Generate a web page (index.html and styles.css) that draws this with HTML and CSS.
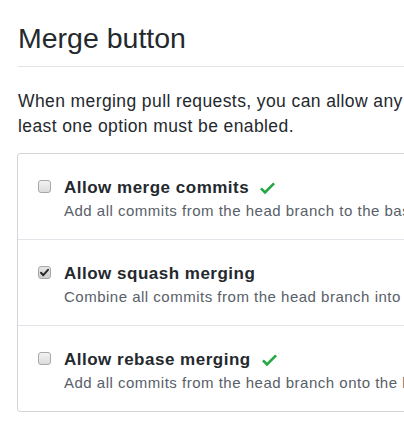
FILE: index.html
```html
<!DOCTYPE html>
<html>
<head>
<meta charset="utf-8">
<link rel="stylesheet" href="styles.css">
</head>
<body>
<div class="page">
  <h2 class="subhead">Merge button</h2>
  <p class="intro">When merging pull requests, you can allow any combination of merge commits, squashing, or rebasing. At<br>least one option must be enabled.</p>
  <div class="box">
    <div class="row">
      <span class="cb"></span>
      <div class="text">
        <div class="label">Allow merge commits <svg class="ok" viewBox="0 0 12 16" width="15" height="20"><path fill="#28a745" d="M12 5l-8 8-4-4 1.5-1.5L4 10l6.5-6.5L12 5z"/></svg></div>
        <div class="note">Add all commits from the head branch to the base branch with a merge commit.</div>
      </div>
    </div>
    <div class="row">
      <span class="cb checked"><svg viewBox="0 0 13 13" width="13" height="13"><path d="M3 6.8l2.3 2.4L10 3.8" fill="none" stroke="#2b2b2b" stroke-width="2" stroke-linecap="round" stroke-linejoin="round"/></svg></span>
      <div class="text">
        <div class="label">Allow squash merging</div>
        <div class="note">Combine all commits from the head branch into a single commit in the base branch.</div>
      </div>
    </div>
    <div class="row">
      <span class="cb"></span>
      <div class="text">
        <div class="label">Allow rebase merging <svg class="ok" viewBox="0 0 12 16" width="15" height="20"><path fill="#28a745" d="M12 5l-8 8-4-4 1.5-1.5L4 10l6.5-6.5L12 5z"/></svg></div>
        <div class="note">Add all commits from the head branch onto the base branch individually.</div>
      </div>
    </div>
  </div>
</div>
</body>
</html>
```

FILE: styles.css
```css
html, body {
  margin: 0;
  padding: 0;
  background: #fff;
  overflow: hidden;
}
.page {
  padding-left: 18px;
  font-family: "Liberation Sans", Arial, sans-serif;
  color: #24292e;
  width: 1000px;
}
.subhead {
  margin: 0;
  padding-top: 21px;
  padding-bottom: 10px;
  font-size: 28.5px;
  line-height: 35px;
  font-weight: 400;
  letter-spacing: 0;
  border-bottom: 1px solid #e1e4e8;
}
.intro {
  margin: 22px 0 14px 0;
  font-size: 17.5px;
  line-height: 25px;
  letter-spacing: 0.4px;
  white-space: nowrap;
}
.box {
  margin-left: -1px;
  border: 1px solid #d1d5da;
  border-radius: 3px;
  width: 600px;
}
.row {
  display: flex;
  align-items: flex-start;
  gap: 13px;
  padding: 24px 0 18px 20px;
  border-top: 1px solid #e1e4e8;
}
.row:first-child {
  border-top: none;
}
.cb {
  box-sizing: border-box;
  width: 13px;
  height: 13px;
  margin-top: 2px;
  flex: none;
  border: 1px solid #a8a8a8;
  border-radius: 3px;
  background: linear-gradient(#f2f2f2, #dcdcdc);
  display: flex;
}
.cb.checked {
  background: linear-gradient(#e6e6e6, #cfcfcf);
}
.cb svg {
  margin: -1px;
}
.text {
  white-space: nowrap;
}
.label {
  font-size: 17px;
  line-height: 20px;
  font-weight: 700;
  letter-spacing: 0.5px;
  display: flex;
  align-items: center;
}
.ok {
  margin-left: 11px;
  margin-top: -1px;
}
.note {
  margin-top: 3px;
  font-size: 15px;
  line-height: 20px;
  letter-spacing: 0.5px;
  color: #586069;
}
```
